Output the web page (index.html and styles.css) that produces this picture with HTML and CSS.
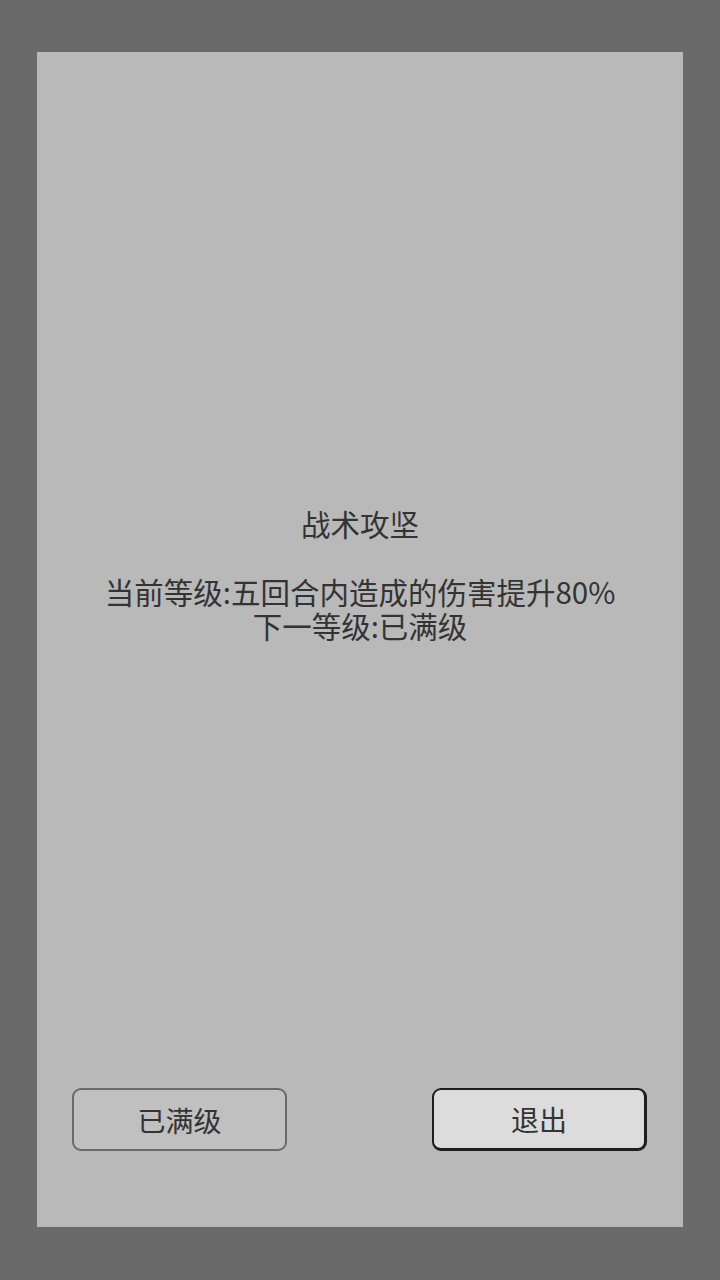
FILE: index.html
```html
<!DOCTYPE html>
<html>
<head>
<meta charset="utf-8">
<link rel="stylesheet" href="styles.css">
</head>
<body>
<div class="screen">
  <div class="panel">
    <div class="info">
      <div class="line">战术攻坚</div>
      <div class="line">&nbsp;</div>
      <div class="line">当前等级:五回合内造成的伤害提升80%</div>
      <div class="line">下一等级:已满级</div>
    </div>
    <div class="buttons">
      <div class="btn btn-max">已满级</div>
      <div class="btn btn-exit">退出</div>
    </div>
  </div>
</div>
</body>
</html>
```
FILE: styles.css
```css
html, body {
  margin: 0;
  padding: 0;
}
body {
  width: 720px;
  height: 1280px;
  background: #6a6a6a;
  font-family: "Noto Sans CJK SC", "Noto Sans", sans-serif;
  color: #333333;
}
.screen {
  padding: 52px 37px 53px 37px;
  box-sizing: border-box;
  height: 1280px;
}
.panel {
  background: #b9b9b9;
  height: 1175px;
  box-sizing: border-box;
  padding-top: 454px;
  display: flex;
  flex-direction: column;
}
.info {
  text-align: center;
  font-size: 29.5px;
  line-height: 34px;
}
.buttons {
  margin-top: auto;
  margin-bottom: 76px;
  display: flex;
  justify-content: space-between;
  padding: 0 36px 0 35px;
}
.btn {
  width: 215px;
  height: 63px;
  box-sizing: border-box;
  border-radius: 9px;
  display: flex;
  align-items: center;
  justify-content: center;
  font-size: 28px;
}
.btn-max {
  background: #c0c0c0;
  border: 2px solid #6a6a6a;
  color: #333333;
}
.btn-exit {
  background: #dcdcdc;
  border: 2px solid #1e1e1e;
  border-right-width: 3px;
  border-bottom-width: 3px;
  color: #333333;
}
```
